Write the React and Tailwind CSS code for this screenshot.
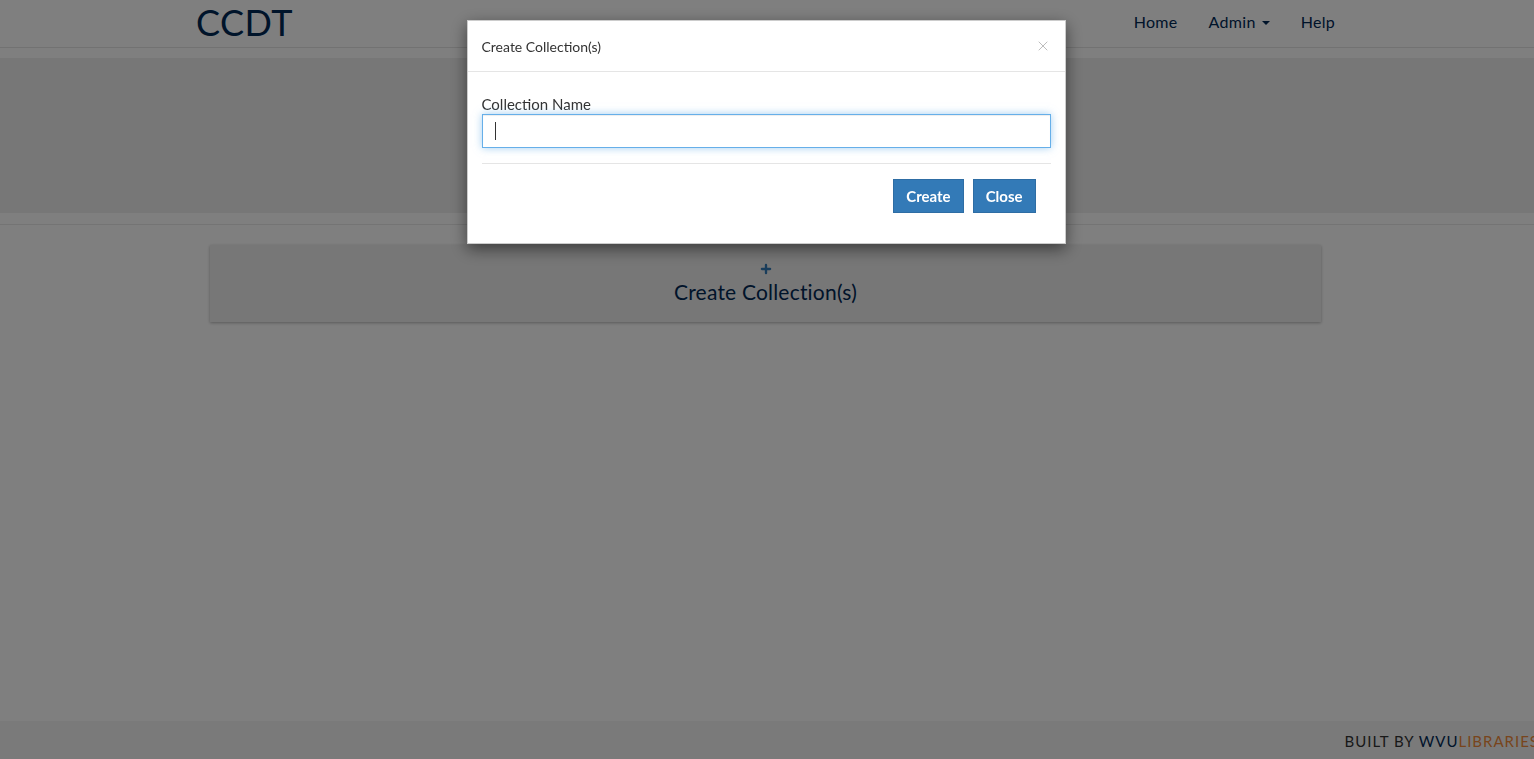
import { Plus, X } from "lucide-react";

export default function App() {
  return (
    <div className="relative h-screen flex flex-col bg-white font-['Lato','Noto_Sans',sans-serif] text-[#002855] overflow-hidden">
      {/* Navbar */}
      <nav className="h-[48px] shrink-0 border-b border-[#e4e4e4]">
        <div className="w-[1170px] mx-auto px-[15px] h-full flex items-center justify-between">
          <a className="text-[36px] leading-none tracking-[0.5px] -mt-[4px] -ml-[1px]">CCDT</a>
          <ul className="flex items-center gap-[31px] text-[16px] tracking-[0.3px] -mt-[4px] mr-[2px]">
            <li>Home</li>
            <li className="flex items-center gap-[6px]">
              Admin
              <span className="w-0 h-0 border-l-[4px] border-r-[4px] border-t-[4px] border-l-transparent border-r-transparent border-t-[#002855] mt-[2px]" />
            </li>
            <li>Help</li>
          </ul>
        </div>
      </nav>

      {/* Jumbotron */}
      <div className="mt-[10px] h-[155px] shrink-0 bg-[#eeeeee]" />

      {/* Main */}
      <main className="flex-1 mt-[11px] border-t border-[#e8e8e8]">
        <div className="w-[1111px] ml-[210px] mt-[20px] h-[77px] bg-[#eeeeee] shadow-[0_1px_3px_rgba(0,0,0,0.3)] flex flex-col items-center justify-center">
          <Plus className="w-[14px] h-[14px] text-[#337ab7] mt-[1px]" strokeWidth={4} />
          <span className="text-[21px] leading-[28px] tracking-[0.2px] mt-[2px]">Create Collection(s)</span>
        </div>
      </main>

      {/* Footer */}
      <footer className="h-[38px] shrink-0 bg-[#f5f5f5] flex items-center justify-end">
        <p className="text-[15px] tracking-[1px] -mr-[5px] mt-[2px] whitespace-nowrap">
          <span className="text-[#333333]">BUILT BY </span>
          <span className="text-[#002855]">WVU</span>
          <span className="text-[#f08a3a]">LIBRARIES</span>
        </p>
      </footer>

      {/* Modal backdrop + dialog */}
      <div className="fixed inset-0 bg-black/50">
        <div className="w-[599px] mx-auto mt-[20px] bg-white border border-black/20 shadow-[0_5px_15px_rgba(0,0,0,0.5)] text-[#333333] translate-x-[-1px]">
          <div className="h-[51px] px-[14px] border-b border-[#e5e5e5] flex items-center justify-between">
            <h4 className="text-[14px]">Create Collection(s)</h4>
            <X className="w-[16px] h-[16px] text-[#bdbdbd]" strokeWidth={1.5} />
          </div>
          <div className="px-[14px] pt-[22px] pb-[30px]">
            <label className="block text-[15px] leading-[20px]">Collection Name</label>
            <div className="relative">
              <input
                type="text"
                className="w-full h-[34px] px-[12px] border border-[#66afe9] outline-none shadow-[inset_0_1px_1px_rgba(0,0,0,0.075),0_0_8px_rgba(102,175,233,0.6)] text-[14px]"
              />
              <span className="absolute left-[13px] top-[8px] w-px h-[18px] bg-[#333333]" />
            </div>
            <div className="mt-[15px] border-t border-[#e5e5e5]" />
            <div className="mt-[15px] pr-[15px] flex justify-end gap-[9px]">
              <button className="h-[34px] px-[12px] bg-[#337ab7] border border-[#2e6da4] text-white text-[15px] font-bold">
                Create
              </button>
              <button className="h-[34px] px-[12px] bg-[#337ab7] border border-[#2e6da4] text-white text-[15px] font-bold">
                Close
              </button>
            </div>
          </div>
        </div>
      </div>
    </div>
  );
}
